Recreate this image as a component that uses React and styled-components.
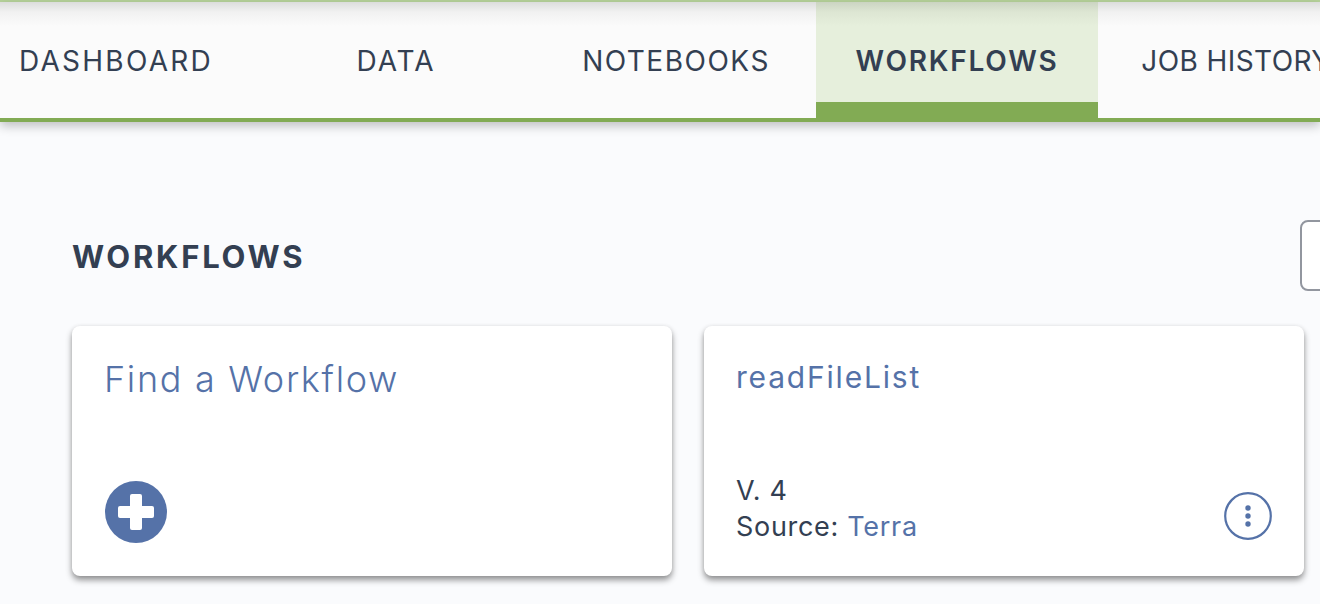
import React from "react";
import styled, { createGlobalStyle } from "styled-components";

const Global = createGlobalStyle`
  html, body { margin: 0; padding: 0; background: #fafbfd; overflow: hidden; }
  body { font-family: Inter, "Open Sans", "Liberation Sans", sans-serif; color: #333f52; }
`;
const Page = styled.div`
  width: 1320px; height: 604px; overflow: hidden; display: flex; flex-direction: column;
`;
const TopStrip = styled.div`
  height: 2px; flex: none; background: #b7d39b;
`;
const Nav = styled.nav`
  position: relative; height: 120px; flex: none; display: flex; box-sizing: border-box;
  background: linear-gradient(#dcdddc 0, #f1f1f1 10px, #fbfbfb 24px, #fbfbfb 100%);
  border-bottom: 4px solid #82ab54;
  box-shadow: 0 4px 10px rgba(0,0,0,.24);
  z-index: 1;
`;
const Tab = styled.div`
  flex: none; width: ${p => p.$w}px; height: ${p => p.$active ? 120 : 116}px; box-sizing: border-box;
  display: flex; align-items: flex-start; justify-content: center; padding-top: 41px; padding-right: ${p => p.$pr || 0}px;
  font-size: 28px; line-height: 36px; letter-spacing: ${p => p.$ls}px; font-weight: ${p => p.$active ? 600 : 400}; white-space: nowrap;
  color: #333f52;
  background: ${p => p.$active ? "linear-gradient(#cbd4c2 0, #dde6d3 10px, #e6efdc 24px, #e6efdc 100%)" : "transparent"};
  border-bottom: ${p => p.$active ? "20px solid #82ab54" : "none"};
`;
const Main = styled.main`
  flex: 1; display: flex; flex-direction: column; padding: 98px 0 0 72px;
`;
const HeaderRow = styled.div`
  display: flex; justify-content: space-between; align-items: center; height: 71px; width: 1248px; margin-bottom: 35px; flex: none;
`;
const Title = styled.h1`
  margin: 2px 0 0; font-size: 31px; font-weight: 700; letter-spacing: 2.8px; color: #333f52;
`;
const BoxButton = styled.div`
  width: 60px; height: 71px; flex: none; box-sizing: border-box; border: 2px solid #92969f; border-radius: 8px; background: #fff; margin-right: -40px;
`;
const Cards = styled.div`
  display: grid; grid-template-columns: 600px 600px; gap: 32px;
`;
const Card = styled.article`
  position: relative; height: 250px; box-sizing: border-box; background: #fff; border-radius: 8px;
  box-shadow: 0 4px 6px rgba(0,0,0,.42), 0 0 4px rgba(0,0,0,.06); padding: 32px;
  display: flex; flex-direction: column; justify-content: space-between;
`;
const FindTitle = styled.div`
  font-size: 36px; line-height: 42px; font-weight: 300; color: #5572a8; letter-spacing: 1.68px;
`;
const ItemTitle = styled.div`
  font-size: 30px; line-height: 36px; margin-top: 1px; font-weight: 400; color: #5572a8; letter-spacing: 1.8px;
`;
const PlusIcon = styled.svg`
  display: block; width: 62px; height: 62px; margin: 0 0 1px 1px;
`;
const Foot = styled.div`
  display: flex; justify-content: space-between; align-items: flex-end;
`;
const Meta = styled.div`
  font-size: 27px; line-height: 36px; font-weight: 400; color: #333f52; letter-spacing: .7px; margin-bottom: -1px;
`;
const Link = styled.span`
  color: #5572a8;
`;
const Kebab = styled.svg`
  display: block; width: 48px; height: 48px; margin-bottom: 4px;
`;

export default function App() {
  return (
    <Page>
      <Global />
      <TopStrip />
      <Nav>
        <Tab $w={232} $ls={2.25}>DASHBOARD</Tab>
        <Tab $w={328} $ls={2}>DATA</Tab>
        <Tab $w={256} $pr={24} $ls={1.5}>NOTEBOOKS</Tab>
        <Tab $w={282} $ls={1.8} $active>WORKFLOWS</Tab>
        <Tab $w={276} $ls={0.4}>JOB HISTORY</Tab>
      </Nav>
      <Main>
        <HeaderRow>
          <Title>WORKFLOWS</Title>
          <BoxButton />
        </HeaderRow>
        <Cards>
          <Card>
            <FindTitle>Find a Workflow</FindTitle>
            <PlusIcon viewBox="0 0 62 62">
              <circle cx="31" cy="31" r="31" fill="#5572a8" />
              <rect x="13" y="25" width="36" height="12" rx="2" fill="#fff" />
              <rect x="25" y="13" width="12" height="36" rx="2" fill="#fff" />
            </PlusIcon>
          </Card>
          <Card>
            <ItemTitle>readFileList</ItemTitle>
            <Foot>
              <Meta>V. 4<br />Source: <Link>Terra</Link></Meta>
              <Kebab viewBox="0 0 48 48">
                <circle cx="24" cy="24" r="22.8" fill="none" stroke="#5572a8" strokeWidth="2.2" />
                <circle cx="24" cy="16" r="2.7" fill="#5572a8" />
                <circle cx="24" cy="24" r="2.7" fill="#5572a8" />
                <circle cx="24" cy="32" r="2.7" fill="#5572a8" />
              </Kebab>
            </Foot>
          </Card>
        </Cards>
      </Main>
    </Page>
  );
}
